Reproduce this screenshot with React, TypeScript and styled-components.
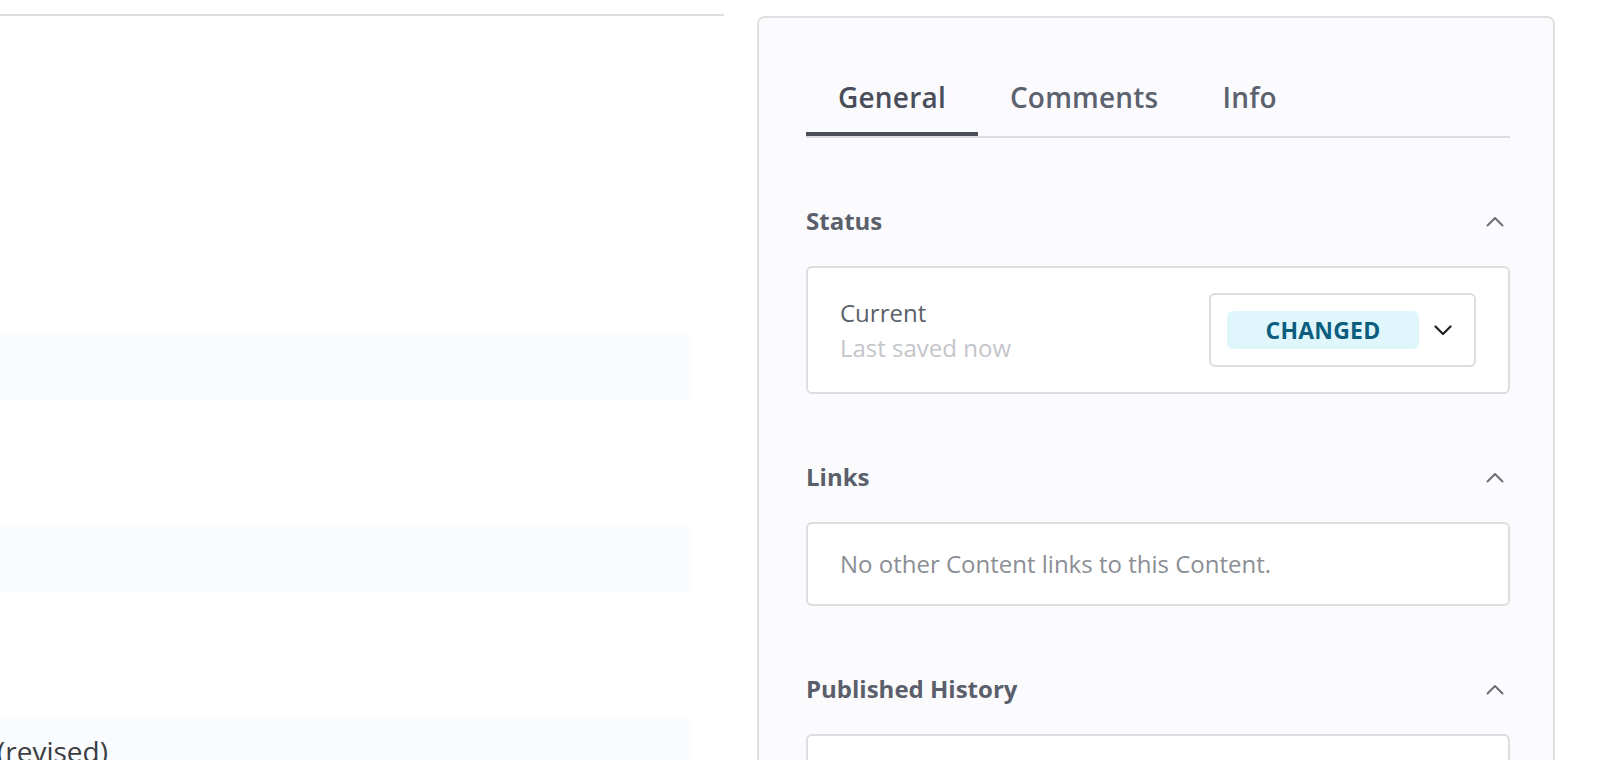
import React, {useState} from 'react';
import styled, {createGlobalStyle} from 'styled-components';

const GlobalStyle = createGlobalStyle`
  html, body {
    margin: 0;
    padding: 0;
    background: #ffffff;
  }

  body {
    font-family: "Open Sans", "Noto Sans", Arial, sans-serif;
    color: #3a3d44;
  }

  * {
    box-sizing: border-box;
  }
`

const tabs = ['General', 'Comments', 'Info']

const ChevronUp = () => (
    <svg width="18" height="12" viewBox="0 0 18 12" fill="none">
        <polyline points="1.5,10.5 9,3 16.5,10.5" stroke="#6b6f79" strokeWidth="2" strokeLinecap="round" strokeLinejoin="round"/>
    </svg>
)

const ChevronDown = () => (
    <svg width="18" height="11" viewBox="0 0 18 11" fill="none">
        <polyline points="1.5,1.5 9,9 16.5,1.5" stroke="#1f2024" strokeWidth="2.2" strokeLinecap="round" strokeLinejoin="round"/>
    </svg>
)

type SectionProps = {
    title: string
    children: React.ReactNode
}

const Section = ({title, children}: SectionProps) => (
    <SectionBox>
        <SectionHeader>
            <SectionTitle>{title}</SectionTitle>
            <ToggleButton aria-label={`Collapse ${title}`}><ChevronUp/></ToggleButton>
        </SectionHeader>
        {children}
    </SectionBox>
)

export default function App() {
    const [activeTab, setActiveTab] = useState('General')

    return (
        <Page>
            <GlobalStyle/>
            <Main>
                <TopBar/>
                <Rows>
                    <Row/>
                    <Row/>
                    <Row><RowText>(revised)</RowText></Row>
                </Rows>
            </Main>

            <Sidebar>
                <TabList>
                    {tabs.map(t => (
                        <Tab key={t} $active={t === activeTab} onClick={() => setActiveTab(t)}>{t}</Tab>
                    ))}
                </TabList>

                <Section title="Status">
                    <Card>
                        <StatusRow>
                            <StatusText>
                                <StatusLabel>Current</StatusLabel>
                                <StatusHint>Last saved now</StatusHint>
                            </StatusText>
                            <Select>
                                <Badge>CHANGED</Badge>
                                <ChevronDown/>
                            </Select>
                        </StatusRow>
                    </Card>
                </Section>

                <Section title="Links">
                    <Card>
                        <EmptyText>No other Content links to this Content.</EmptyText>
                    </Card>
                </Section>

                <Section title="Published History">
                    <Card $minHeight={80}/>
                </Section>
            </Sidebar>
        </Page>
    )
}

const Page = styled.div`
  display: flex;
  align-items: flex-start;
  width: 1620px;
  height: 760px;
  overflow: hidden;
`

const Main = styled.div`
  width: 724px;
  flex-shrink: 0;
`

const TopBar = styled.div`
  height: 16px;
  border-bottom: 2px solid #dedede;
`

const Rows = styled.div`
  display: flex;
  flex-direction: column;
  gap: 127px;
  padding-top: 319px;
  padding-right: 32px;
`

const Row = styled.div`
  height: 65px;
  background: #fafbfd;
  padding: 12px 0 0;
`

const RowText = styled.div`
  margin-left: -3px;
  font-size: 28px;
  line-height: 40px;
  color: #3b3d42;
`

const Sidebar = styled.aside`
  width: 798px;
  height: 800px;
  margin-top: 16px;
  margin-left: 33px;
  flex-shrink: 0;
  padding: 59px 43px 0 47px;
  background: #fbfbfd;
  border: 2px solid #e0e0e2;
  border-radius: 8px;
`

const TabList = styled.div`
  display: flex;
  border-bottom: 2px solid #dcdcdf;
`

const Tab = styled.button<{ $active?: boolean }>`
  padding: 0 32px 15px;
  margin: 0;
  background: none;
  border: none;
  border-bottom: 4px solid ${p => p.$active ? '#4a4d59' : 'transparent'};
  font-family: inherit;
  font-size: 28px;
  font-weight: 600;
  letter-spacing: 0.2px;
  line-height: 40px;
  color: ${p => p.$active ? '#4a4e5a' : '#5d6270'};
  cursor: pointer;
`

const SectionBox = styled.section`
  margin-top: 67px;
`

const SectionHeader = styled.div`
  display: flex;
  align-items: center;
  justify-content: space-between;
  height: 32px;
  margin-bottom: 29px;
`

const SectionTitle = styled.h3`
  margin: 0;
  font-size: 24px;
  font-weight: 700;
  line-height: 32px;
  color: #5a5f6b;
`

const ToggleButton = styled.button`
  display: flex;
  align-items: center;
  justify-content: center;
  padding: 0;
  margin-right: 6px;
  background: none;
  border: none;
  cursor: pointer;
`

const Card = styled.div<{ $minHeight?: number }>`
  background: #ffffff;
  border: 2px solid #dedee0;
  border-radius: 6px;
  padding: 22px 32px;
  min-height: ${p => p.$minHeight ? `${p.$minHeight}px` : 'auto'};
`

const StatusRow = styled.div`
  display: flex;
  align-items: center;
  justify-content: space-between;
  margin: 3px 0;
`

const StatusText = styled.div`
  display: flex;
  flex-direction: column;
  font-size: 24px;
  line-height: 35px;
`

const StatusLabel = styled.span`
  color: #5b5f69;
`

const StatusHint = styled.span`
  color: #c4c5ca;
`

const Select = styled.div`
  display: flex;
  align-items: center;
  gap: 15px;
  padding: 16px 22px 16px 16px;
  background: #ffffff;
  border: 2px solid #dcdcdf;
  border-radius: 6px;
`

const Badge = styled.span`
  display: inline-block;
  width: 192px;
  height: 38px;
  line-height: 38px;
  text-align: center;
  background: #e0f6fd;
  border-radius: 6px;
  font-size: 23px;
  font-weight: 700;
  letter-spacing: 0.2px;
  color: #0c5e7e;
`

const EmptyText = styled.p`
  margin: 0;
  font-size: 24px;
  line-height: 36px;
  color: #8b8e95;
`
